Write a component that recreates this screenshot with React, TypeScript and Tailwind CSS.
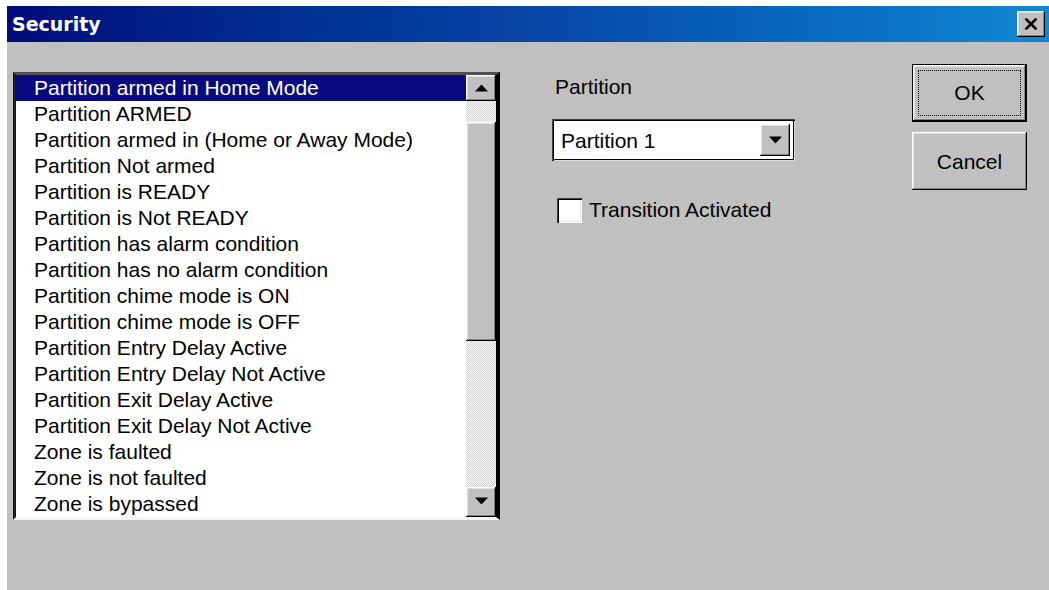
import React from "react";

const items = [
  "Partition armed in Home Mode",
  "Partition ARMED",
  "Partition armed in (Home or Away Mode)",
  "Partition Not armed",
  "Partition is READY",
  "Partition is Not READY",
  "Partition has alarm condition",
  "Partition has no alarm condition",
  "Partition chime mode is ON",
  "Partition chime mode is OFF",
  "Partition Entry Delay Active",
  "Partition Entry Delay Not Active",
  "Partition Exit Delay Active",
  "Partition Exit Delay Not Active",
  "Zone is faulted",
  "Zone is not faulted",
  "Zone is bypassed",
];

const raised =
  "bg-[#c0c0c0] shadow-[inset_-1px_-1px_#000,inset_1px_1px_#fff,inset_-2px_-2px_#808080,inset_2px_2px_#dfdfdf]";

function Arrow({ up }: { up?: boolean }) {
  return (
    <svg width="13" height="8" viewBox="0 0 13 8">
      {up ? <polygon points="6.5,0.5 13,7.5 0,7.5" fill="#000" /> : <polygon points="0,0.5 13,0.5 6.5,7.5" fill="#000" />}
    </svg>
  );
}

function Track({ h }: { h: number }) {
  return (
    <div
      className="w-full bg-[repeating-conic-gradient(#cfcfcf_0%_25%,#ffffff_0%_50%)] bg-size-[2px_2px]"
      style={{ height: h }}
    />
  );
}

export default function App() {
  return (
    <div className="w-[1049px] h-[590px] overflow-hidden bg-white font-['Liberation_Sans',Arial,sans-serif] text-[21px] text-black">
      <div className="ml-[7px] mt-[6px] h-[584px] bg-[#c0c0c0] flex flex-col">
        {/* title bar */}
        <div className="h-[36px] flex items-center justify-between bg-gradient-to-r from-[#000a7a] via-[#0846a6] to-[#1288d4] pl-[5px] pr-[4px]">
          <span className="font-['DejaVu_Sans',Verdana,sans-serif] font-bold text-[19px] text-white leading-none">Security</span>
          <div className={`w-[28px] h-[26px] flex items-center justify-center ${raised}`}>
            <svg width="14" height="12" viewBox="0 0 14 12">
              <path d="M1.5 0.5 L12.5 11.5 M12.5 0.5 L1.5 11.5" stroke="#000" strokeWidth="2.6" />
            </svg>
          </div>
        </div>

        {/* body */}
        <div className="flex pt-[22px]">
          {/* list box */}
          <div className="ml-[6px] mt-[8px] w-[487px] h-[448px] flex border-l-[3px] border-t-[3px] border-l-[#1a1a1a] border-t-[#505050] border-r-[4px] border-r-black border-b-[3px] border-b-[#f4f4f4]">
            <div className="flex-1 bg-white">
              {items.map((t, i) => (
                <div
                  key={t}
                  className={`h-[26px] leading-[26px] pl-[18px] whitespace-nowrap ${i === 0 ? "bg-[#0a0a80] text-white" : ""}`}
                >
                  {t}
                </div>
              ))}
            </div>
            <div className="w-[30px] flex flex-col">
              <div className={`h-[26px] flex items-center justify-center ${raised}`}>
                <Arrow up />
              </div>
              <Track h={21} />
              <div className={`h-[219px] ${raised}`} />
              <Track h={146} />
              <div className={`h-[30px] flex items-center justify-center pb-[3px] ${raised}`}>
                <Arrow />
              </div>
            </div>
          </div>

          {/* options */}
          <div className="ml-[52px] mt-[8px] flex-1 pt-[2px]">
            <div className="h-[26px] leading-[26px] pl-[3px]">Partition</div>
            <div className="mt-[19px] w-[243px] h-[42px] bg-white flex items-center shadow-[inset_1px_1px_#404040,inset_2px_2px_#000,inset_-1px_-1px_#dcdcdc,inset_-2px_-2px_#000] pl-[9px] pr-[5px]">
              <span className="flex-1 leading-none">Partition 1</span>
              <div className={`w-[30px] h-[32px] flex items-center justify-center ${raised}`}>
                <Arrow />
              </div>
            </div>
            <div className="mt-[36px] ml-[5px] h-[26px] flex items-center">
              <div className="w-[25px] h-[25px] bg-white shadow-[inset_1px_1px_#404040,inset_2px_2px_#000,inset_-1px_-1px_#fff,inset_-2px_-2px_#e8e8e8]" />
              <span className="ml-[7px]">Transition Activated</span>
            </div>
          </div>

          {/* dialog buttons */}
          <div className="mr-[22px] flex flex-col gap-[10px]">
            <div className="w-[115px] h-[58px] border border-black">
              <div className={`w-full h-full p-[5px] ${raised}`}>
                <div className="w-full h-full border border-dotted border-black flex items-center justify-center leading-none pb-[1px]">
                  OK
                </div>
              </div>
            </div>
            <div className={`w-[115px] h-[58px] flex items-center justify-center leading-none ${raised}`}>Cancel</div>
          </div>
        </div>
      </div>
    </div>
  );
}
